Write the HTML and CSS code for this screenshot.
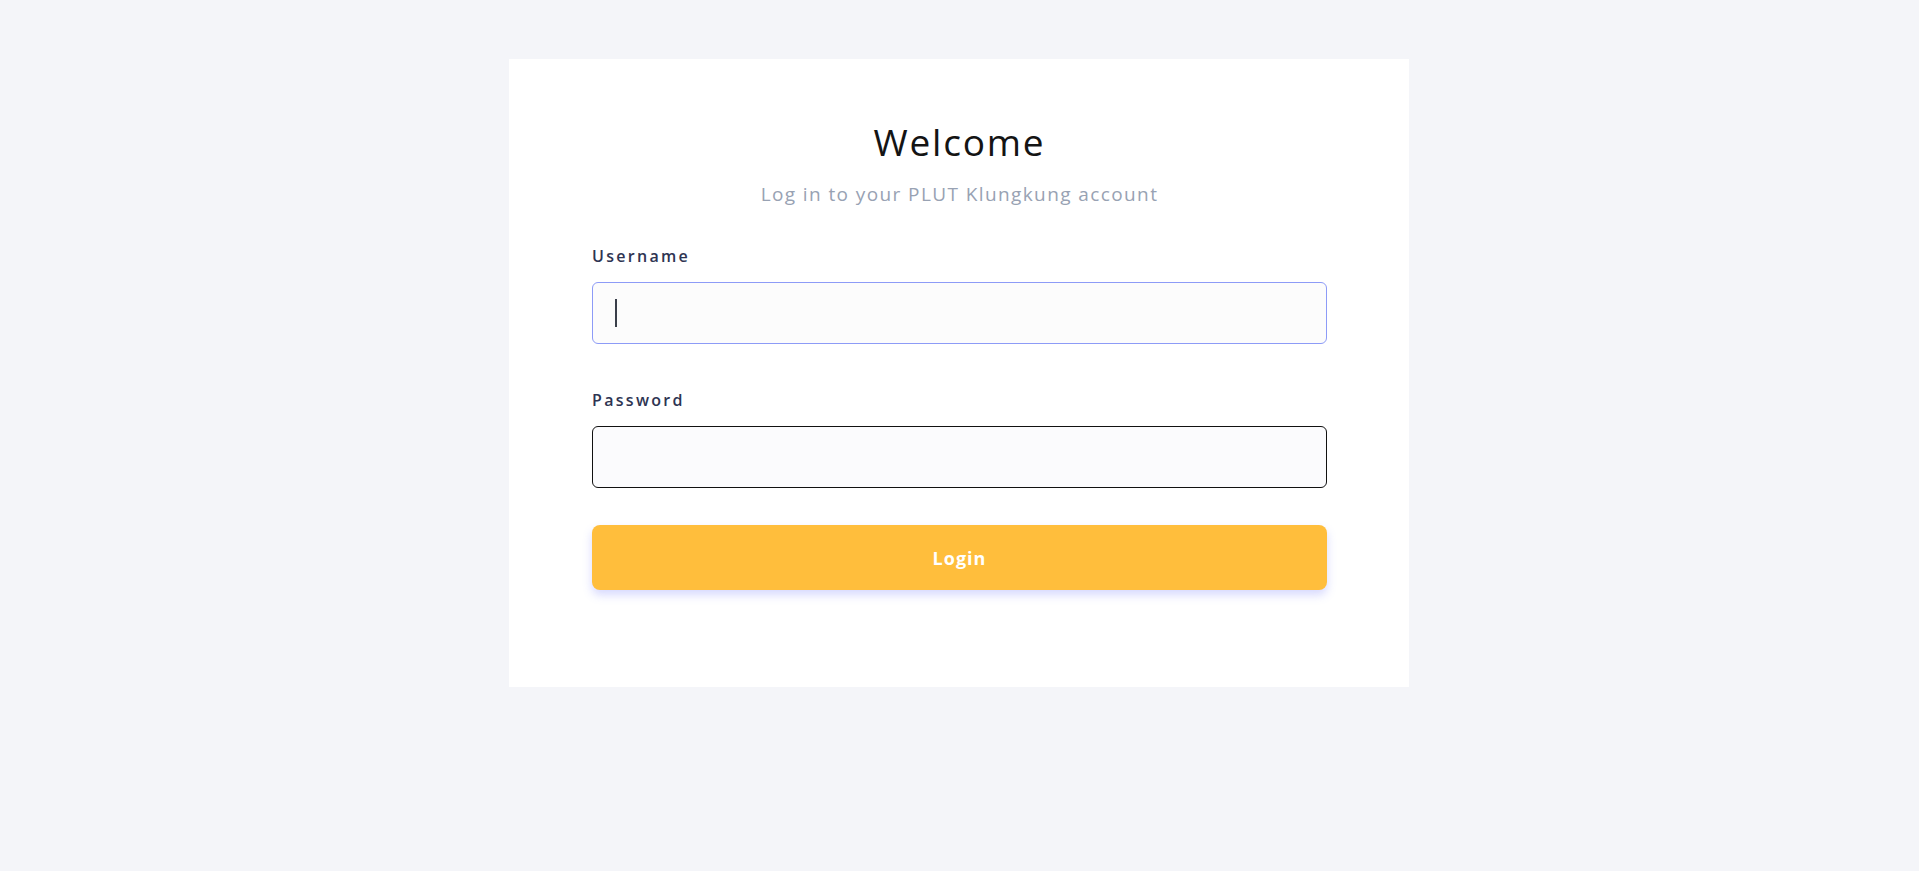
FILE: index.html
```html
<!DOCTYPE html>
<html lang="en">
<head>
<meta charset="utf-8">
<title>Login - PLUT Klungkung</title>
<link rel="stylesheet" href="styles.css">
</head>
<body>
<main class="page">
  <section class="card">
    <h1 class="title">Welcome</h1>
    <p class="subtitle">Log in to your PLUT Klungkung account</p>
    <form class="form">
      <div class="field">
        <label class="label" for="username">Username</label>
        <div class="input-wrap">
          <input class="input input-focus" id="username" type="text">
          <span class="caret"></span>
        </div>
      </div>
      <div class="field">
        <label class="label" for="password">Password</label>
        <div class="input-wrap">
          <input class="input input-dark" id="password" type="password">
        </div>
      </div>
      <button class="btn" type="button">Login</button>
    </form>
  </section>
</main>
</body>
</html>
```

FILE: styles.css
```css
* { box-sizing: border-box; }
html, body { margin: 0; padding: 0; }
body {
  background: #f4f5f9;
  font-family: "Open Sans", "Noto Sans", sans-serif;
  width: 1919px;
  height: 871px;
  overflow: hidden;
}
.page {
  display: flex;
  justify-content: center;
  padding-top: 59px;
  padding-right: 1px;
}
.card {
  width: 900px;
  height: 628px;
  background: #ffffff;
  padding: 56px 82px 0 83px;
  display: flex;
  flex-direction: column;
  align-items: stretch;
}
.title {
  margin: 0;
  text-align: center;
  font-size: 37px;
  font-weight: 400;
  letter-spacing: 1.8px;
  line-height: 54px;
  color: #141414;
}
.subtitle {
  margin: 12px 0 0;
  text-align: center;
  font-size: 19px;
  letter-spacing: 1.4px;
  line-height: 26px;
  color: #98a2b3;
}
.form {
  margin-top: 38px;
  display: flex;
  flex-direction: column;
}
.field {
  display: flex;
  flex-direction: column;
  margin-bottom: 45px;
}
.field:last-of-type { margin-bottom: 37px; }
.label {
  font-size: 16px;
  font-weight: 600;
  letter-spacing: 2.3px;
  color: #2e3452;
  line-height: 22px;
  margin-bottom: 15px;
}
.input-wrap { position: relative; }
.input {
  display: block;
  width: 100%;
  height: 62px;
  border-radius: 6px;
  padding: 0 23px;
  font: inherit;
  font-size: 16px;
  outline: none;
}
.input-focus {
  border: 1px solid #8d9bf7;
  background: #fcfcfc;
}
.input-dark {
  border: 1px solid #111111;
  background: #fbfbfd;
}
.caret {
  position: absolute;
  left: 23px;
  top: 17px;
  width: 2px;
  height: 28px;
  background: #3a3f4a;
}
.btn {
  margin-top: 0;
  height: 65px;
  border: none;
  border-radius: 8px;
  background: #ffbe3c;
  color: #ffffff;
  font: inherit;
  font-size: 18px;
  font-weight: 700;
  letter-spacing: 1px;
  box-shadow: 0 5px 10px rgba(110, 120, 250, 0.28);
  cursor: pointer;
}
```
